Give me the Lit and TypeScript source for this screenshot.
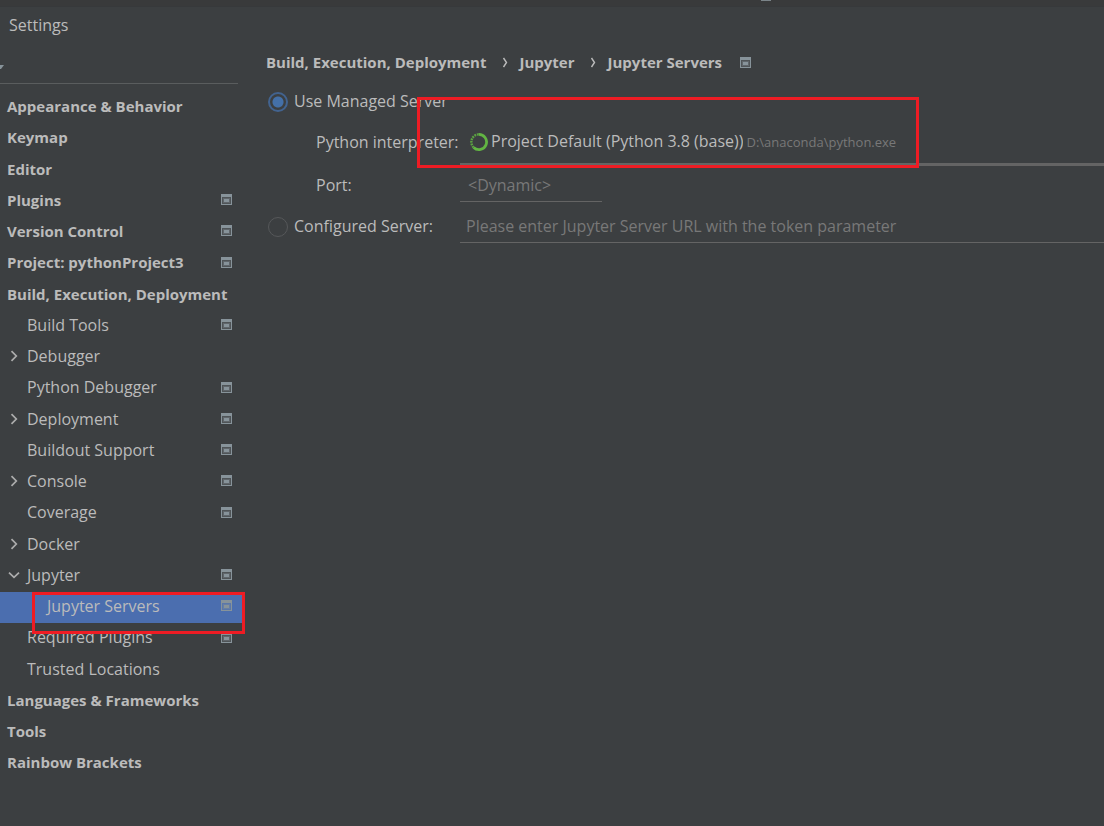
import { LitElement, html, css, svg, nothing } from "lit";
import { customElement, property, state } from "lit/decorators.js";
import { classMap } from "lit/directives/class-map.js";

interface Entry {
  label: string;
  level: 0 | 1 | 2;
  arrow?: "right" | "down";
  project?: boolean;
}

const ENTRIES: Entry[] = [
  { label: "Appearance & Behavior", level: 0 },
  { label: "Keymap", level: 0 },
  { label: "Editor", level: 0 },
  { label: "Plugins", level: 0, project: true },
  { label: "Version Control", level: 0, project: true },
  { label: "Project: pythonProject3", level: 0, project: true },
  { label: "Build, Execution, Deployment", level: 0 },
  { label: "Build Tools", level: 1, project: true },
  { label: "Debugger", level: 1, arrow: "right" },
  { label: "Python Debugger", level: 1, project: true },
  { label: "Deployment", level: 1, arrow: "right", project: true },
  { label: "Buildout Support", level: 1, project: true },
  { label: "Console", level: 1, arrow: "right", project: true },
  { label: "Coverage", level: 1, project: true },
  { label: "Docker", level: 1, arrow: "right" },
  { label: "Jupyter", level: 1, arrow: "down", project: true },
  { label: "Jupyter Servers", level: 2, project: true },
  { label: "Required Plugins", level: 1, project: true },
  { label: "Trusted Locations", level: 1 },
  { label: "Languages & Frameworks", level: 0 },
  { label: "Tools", level: 0 },
  { label: "Rainbow Brackets", level: 0 },
];

const projectIcon = html`<svg width="11" height="11" viewBox="0 0 11 11" aria-hidden="true">
  <path fill="#87939a" fill-rule="evenodd" d="M0 0h11v11H0zM1 3v7h9V3z" />
  <path fill="#87939a" opacity=".25" d="M1 3h9v7H1z" />
  <path fill="#87939a" opacity=".3" d="M2 4h7v5H2z" />
  <path fill="#87939a" d="M3 5h5v3H3z" />
</svg>`;

const chevron = (dir: "right" | "down") => html`<svg width="14" height="14" viewBox="0 0 14 14" aria-hidden="true">
  ${svg`<path fill="none" stroke="#adadad" stroke-width="1.7"
    d=${dir === "right" ? "M4.5 2.2 9.3 7 4.5 11.8" : "M2 4.6 7 9.4 12 4.6"} />`}
</svg>`;

@customElement("settings-tree")
export class SettingsTree extends LitElement {
  @property() selected = "";

  static styles = css`
    :host { display: block; }
    .tree { list-style: none; margin: 0; padding: 0; }
    .item { position: relative; height: 31px; }
    .item:nth-child(4n + 2) { height: 32px; }
    .link {
      display: flex; align-items: center; box-sizing: border-box;
      height: 100%; padding: 0 11px 4px 7px;
      color: #bbbbbb; text-decoration: none; white-space: nowrap;
    }
    .top { font-weight: 700; font-size: 15px; }
    .deep { padding-left: 27px; }
    .on { background: #4b6eaf; }
    .slot { display: flex; width: 20px; }
    .name { flex: 1; }
    .mark { position: absolute; z-index: 1; inset: 0 -2px -11px 32px; border: 3px solid #ee1c24; pointer-events: none; }
  `;

  private pick(e: Event, label: string) {
    e.preventDefault();
    this.dispatchEvent(new CustomEvent("pick", { detail: label }));
  }

  render() {
    return html`<ul class="tree">
      ${ENTRIES.map((it) => html`<li class="item">
        <a href="#" class=${classMap({ link: true, top: it.level === 0, deep: it.level === 2, on: it.label === this.selected })}
          @click=${(e: Event) => this.pick(e, it.label)}>
          ${it.level > 0 ? html`<span class="slot">${it.arrow ? chevron(it.arrow) : nothing}</span>` : nothing}
          <span class="name">${it.label}</span>
          ${it.project ? projectIcon : nothing}
        </a>
        ${it.label === "Jupyter Servers" ? html`<span class="mark"></span>` : nothing}
      </li>`)}
    </ul>`;
  }
}

@customElement("server-form")
export class ServerForm extends LitElement {
  @state() private mode = "managed";

  static styles = css`
    :host { display: block; position: relative; }
    .row { display: grid; grid-template-columns: 194px 1fr; align-items: center; }
    .row + .row { margin-top: 4px; }
    .row.last { margin-top: 9px; }
    .managed { height: 43px; }
    .row.row.interp { margin-top: 0; }
    .choice { display: flex; align-items: center; gap: 6px; padding-left: 2px; white-space: nowrap; }
    .caption { padding-bottom: 2px; }
    .label { padding-left: 50px; padding-bottom: 2px; white-space: nowrap; }
    .interp .label { padding-bottom: 6px; }
    .radio {
      appearance: none; box-sizing: border-box; flex: none; width: 20px; height: 20px; margin: 0;
      border: 1px solid #56585a; border-radius: 50%;
    }
    .radio:checked {
      border: 2px solid #42638f;
      background: radial-gradient(circle, #4470a8 5px, transparent 6px);
    }
    .field { box-sizing: border-box; height: 32px; border: 0; border-bottom: 1px solid #646464; }
    .text { width: 100%; padding: 0 6px 2px; background: none; color: #bbbbbb; font: inherit; outline: 0; border-radius: 0; }
    .text::placeholder { color: #787878; opacity: 1; }
    .port { width: 142px; padding: 0 8px 2px; }
    .combo { display: flex; align-items: center; height: 43px; padding: 0 0 2px 9px; border-bottom-width: 3px; }
    .select {
      appearance: none; margin: 0 3px 0 2px; padding: 0 0 2px; border: 0; background: none;
      color: #bbbbbb; font: inherit; outline: 0; field-sizing: content;
    }
    .path { color: #787878; font-size: 13px; white-space: nowrap; }
    .mark {
      position: absolute; z-index: 1; left: 151px; top: 17px; width: 502px; height: 71px;
      box-sizing: border-box; border: 3px solid #ee1c24; pointer-events: none;
    }
  `;

  render() {
    return html`
      <div class="row managed">
        <label class="choice">
          <input class="radio" type="radio" name="server" .checked=${this.mode === "managed"} @change=${() => (this.mode = "managed")} />
          <span class="caption">Use Managed Server</span>
        </label>
      </div>
      <div class="row interp">
        <label class="label" for="interp">Python interpreter:</label>
        <div class="field combo">
          <svg width="20" height="20" viewBox="0 0 20 20" aria-hidden="true">
            <path d="M9.5 2.4A7.6 7.6 0 1 1 4.6 15.4" fill="none" stroke="#62b543" stroke-width="2.8" />
            <path d="M4.6 15.4A7.6 7.6 0 0 1 9.5 2.4" fill="none" stroke="#62b543" stroke-width="2.4" stroke-dasharray="1.8 0.8" opacity=".85" />
          </svg>
          <select class="select" id="interp">
            <option>Project Default (Python 3.8 (base))</option>
          </select>
          <span class="path">D:\\anaconda\\python.exe</span>
        </div>
      </div>
      <div class="row">
        <label class="label" for="port">Port:</label>
        <input class="field text port" id="port" placeholder="<Dynamic>" />
      </div>
      <div class="row last">
        <label class="choice">
          <input class="radio" type="radio" name="server" .checked=${this.mode === "configured"} @change=${() => (this.mode = "configured")} />
          <span class="caption">Configured Server:</span>
        </label>
        <input class="field text" aria-label="Configured Server" placeholder="Please enter Jupyter Server URL with the token parameter" />
      </div>
      <span class="mark"></span>
    `;
  }
}

@customElement("app-root")
export class AppRoot extends LitElement {
  @state() private page = "Jupyter Servers";

  static styles = css`
    :host {
      display: flex; flex-direction: column; min-height: 100vh; overflow: hidden;
      background: #3c3f41; color: #bbbbbb;
      font: 16px/20px "Open Sans", "Noto Sans", sans-serif;
    }
    .strip { display: flex; justify-content: flex-end; height: 6px; background: #393a3b; border-bottom: 1px solid #37393b; }
    .remnant { width: 10px; height: 1px; margin-right: 333px; background: #7b8489; }
    .title { margin: 0; padding: 0 9px; height: 38px; font-size: 16px; font-weight: 400; line-height: 36px; }
    .body { display: grid; grid-template-columns: 243px 1fr; flex: 1; }
    .search { display: flex; align-items: center; height: 38px; margin-right: 5px; border-bottom: 1px solid #5a5d5e; }
    .query { width: 100%; padding: 0 12px; border: 0; outline: 0; background: none; color: inherit; font: inherit; }
    .drop { flex: none; margin-top: 6px; }
    .tree { margin-top: 8px; }
    .main { padding-left: 23px; }
    .crumbs {
      display: flex; align-items: center; height: 33px; padding-bottom: 2px;
      font-weight: 700; font-size: 15px; white-space: nowrap;
    }
    .crumbs .icon { display: flex; margin: 2px 0 0 18px; }
  `;

  render() {
    const sep = html`<svg width="33" height="12" viewBox="0 0 33 12" aria-hidden="true">
      <path d="M16.5 2l3 4.5-3 4.5" fill="none" stroke="#bbbbbb" stroke-width="1.4" />
    </svg>`;
    return html`
      <div class="strip"><span class="remnant"></span></div>
      <h1 class="title">Settings</h1>
      <div class="body">
        <nav>
          <div class="search">
            <svg class="drop" width="4" height="4" viewBox="0 0 4 4" aria-hidden="true"><path d="M0 0h4L1 4H0z" fill="#87939a" /></svg>
            <input class="query" type="search" aria-label="Search settings" />
          </div>
          <settings-tree class="tree" .selected=${this.page} @pick=${(e: CustomEvent) => (this.page = e.detail)}></settings-tree>
        </nav>
        <main class="main">
          <div class="crumbs">
            <span>Build, Execution, Deployment</span>${sep}<span>Jupyter</span>${sep}<span>Jupyter Servers</span>
            <span class="icon">${projectIcon}</span>
          </div>
          <server-form></server-form>
        </main>
      </div>
    `;
  }
}
